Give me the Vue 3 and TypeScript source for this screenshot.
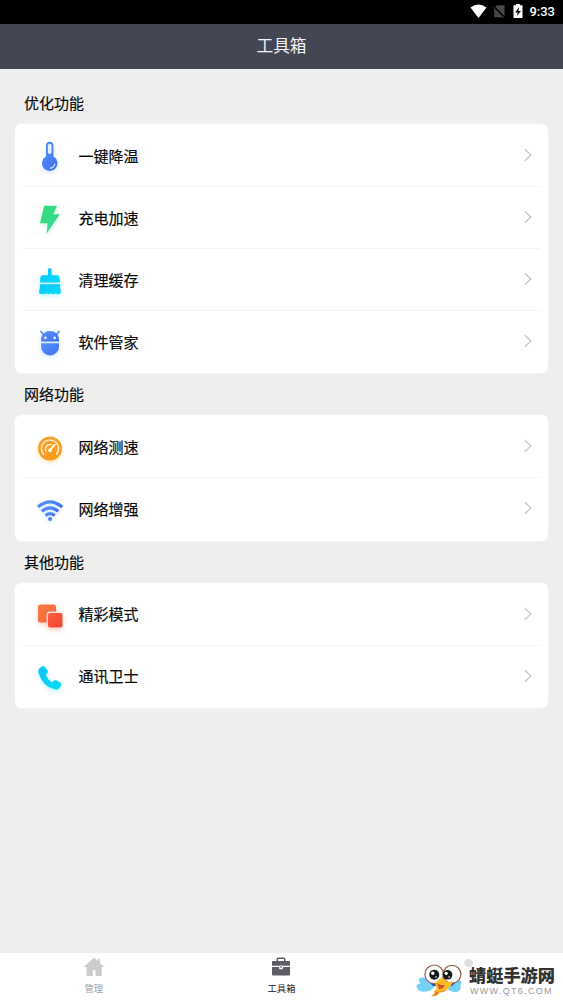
<script setup lang="ts">
interface Tool { icon: string; label: string }
interface Section { title: string; tools: Tool[] }

const sections: Section[] = [
  {
    title: '优化功能',
    tools: [
      { icon: 'thermo', label: '一键降温' },
      { icon: 'bolt', label: '充电加速' },
      { icon: 'brush', label: '清理缓存' },
      { icon: 'robot', label: '软件管家' },
    ],
  },
  {
    title: '网络功能',
    tools: [
      { icon: 'gauge', label: '网络测速' },
      { icon: 'wifi', label: '网络增强' },
    ],
  },
  {
    title: '其他功能',
    tools: [
      { icon: 'squares', label: '精彩模式' },
      { icon: 'phone', label: '通讯卫士' },
    ],
  },
]
</script>

<template>
  <div class="screen">
    <svg class="defs" width="0" height="0">
      <defs>
        <linearGradient id="blue" x1="0" y1="0" x2="1" y2="1"><stop offset="0" stop-color="#5a92fa" /><stop offset="1" stop-color="#3b6ff0" /></linearGradient>
        <linearGradient id="green" x1="0" y1="0" x2="1" y2="1"><stop offset="0" stop-color="#2fdc74" /><stop offset="1" stop-color="#3ed79f" /></linearGradient>
        <linearGradient id="cyan" x1="0" y1="0" x2="1" y2="1"><stop offset="0" stop-color="#0bc4fb" /><stop offset="1" stop-color="#08dcf6" /></linearGradient>
        <linearGradient id="orange" x1="0" y1="0" x2="1" y2="1"><stop offset="0" stop-color="#f2a13a" /><stop offset="1" stop-color="#fd9a0c" /></linearGradient>
        <linearGradient id="coral" x1="0" y1="0" x2="1" y2="1"><stop offset="0" stop-color="#f77c45" /><stop offset="1" stop-color="#fa5f3c" /></linearGradient>
        <linearGradient id="red" x1="0" y1="0" x2="1" y2="1"><stop offset="0" stop-color="#fb6145" /><stop offset="1" stop-color="#f63f2e" /></linearGradient>
      </defs>
    </svg>

    <div class="status">
      <svg class="status-icons" viewBox="0 0 56 18" width="56" height="18">
        <path d="M.5 4.400Q8.500-1.400 16.500 4.400L8.500 15Z" fill="#fff" />
        <path d="M27 2.200H34.500V14.200H24.200V5Z" fill="#484848" />
        <path d="M22.900 2.900 35 15" stroke="#000" stroke-width="1.800" />
        <path d="M22.600 3.700 34 15" stroke="#484848" stroke-width=".8" />
        <path d="M46 1H50V2.300H52.500V15H43.500V2.300H46Z" fill="#fff" />
        <path d="M49.100 4 45.200 9.400H47.700L47 13 50.900 7.900H48.400Z" fill="#000" />
      </svg>
      <span class="time">9:33</span>
    </div>

    <header class="header">工具箱</header>

    <main class="content">
      <section v-for="section in sections" :key="section.title">
        <h2 class="title">{{ section.title }}</h2>
        <ul class="card">
          <li v-for="tool in section.tools" :key="tool.label" class="row">
            <svg class="icon" :class="tool.icon" viewBox="0 0 36 36" width="36" height="36">
              <g v-if="tool.icon === 'thermo'">
                <path d="M14 8.400A3.700 3.700 0 0 1 21.400 8.400V19.600A7.700 7.700 0 1 1 14 19.600Z" fill="url(#blue)" />
                <rect x="15.900" y="6.700" width="3.600" height="10.400" rx="1.800" fill="#e7f0ff" />
                <path d="M18.400 31.200A5.100 5.100 0 0 0 22.800 27" fill="none" stroke="#e1edff" stroke-width="1.200" stroke-linecap="round" />
              </g>
              <path v-else-if="tool.icon === 'bolt'" d="M12.300 6.700H25L21.400 15.300H27.800L14.500 34.800 15.700 24.300H8Z" fill="url(#green)" />
              <g v-else-if="tool.icon === 'brush'" fill="url(#cyan)">
                <path d="M16 9Q16 7 17.850 7T19.700 9V14.300H25.200Q27.400 14.300 27.600 16.500L28 21.500H8L8.400 16.500Q8.600 14.300 10.800 14.300H16Z" />
                <path d="M8 23.200H28Q28 27 29 31Q29 33 27 33H24.300V31.200L23 33H19.500V31.200L18.200 33H14.800V31.200L13.500 33H8.800Q6.800 33 7.100 31Q8 27 8 23.200Z" />
              </g>
              <g v-else-if="tool.icon === 'robot'">
                <path d="M9 8.500 11.500 11.500M27 8.500 24.500 11.500" stroke="#5686f5" stroke-width="1.700" stroke-linecap="round" />
                <path d="M9 18.500Q8.800 13 11.500 10.400Q14 8 18 8T24.500 10.400Q27.200 13 27 18.500Z" fill="url(#blue)" />
                <path d="M9 20.300H27V23.500A9 9 0 0 1 9 23.500Z" fill="url(#blue)" />
                <circle cx="13.400" cy="14.900" r="1.300" fill="#e8f0ff" /><circle cx="22.600" cy="14.900" r="1.300" fill="#e8f0ff" />
              </g>
              <g v-else-if="tool.icon === 'gauge'" fill="none">
                <circle cx="18" cy="20.500" r="12" fill="url(#orange)" />
                <path d="M11.800 26.500A8.600 8.600 0 1 1 24.200 26.500" stroke="#ffe9c4" stroke-width="1.500" stroke-linecap="round" />
                <path d="M13.600 23A5 5 0 0 1 19.500 16.600" stroke="#ffe9c4" stroke-width="1.400" stroke-linecap="round" />
                <path d="M18 22 22.800 16.700" stroke="#fff8e8" stroke-width="1.900" stroke-linecap="round" />
                <circle cx="18" cy="22.300" r="1.900" fill="#fff8e8" />
              </g>
              <g v-else-if="tool.icon === 'wifi'" fill="none" stroke="url(#blue)" stroke-width="3.200">
                <path d="M6 16.900Q18 6.700 30.200 16.900" />
                <path d="M9.900 21.300Q18 14.500 26.300 21.300" />
                <path d="M13.600 25.500Q18 21.900 22.600 25.500" />
                <circle cx="18.100" cy="28.900" r="2" fill="#4b7ff5" stroke="none" />
              </g>
              <g v-else-if="tool.icon === 'squares'">
                <rect x="6" y="8.500" width="18" height="18" rx="2.500" fill="url(#coral)" />
                <rect x="14.600" y="15.600" width="16.400" height="16.400" rx="3" fill="#ffe2da" />
                <rect x="15.900" y="16.900" width="14.500" height="14.500" rx="2.200" fill="url(#red)" />
              </g>
              <path v-else d="M7.500 10.200 9.900 8.400Q11.500 7.400 12.800 9L15.500 12.500Q16.400 13.800 15.200 15.200L13.700 17Q15.400 21.400 19.900 24.200L22.300 22.500Q23.500 21.700 24.800 22.400L28.600 24.700Q30 25.800 29 27.500L27.500 29.900Q26 32 22.600 31.300Q11 28.700 6.600 15Q5.700 11.900 7.500 10.200Z" fill="url(#cyan)" />
            </svg>
            <span class="label">{{ tool.label }}</span>
            <svg class="chevron" viewBox="0 0 8 14" width="8" height="14"><path d="M.8 1.200 6.900 7 .8 12.800" fill="none" stroke="#c8c8c8" stroke-width="1.300" /></svg>
          </li>
        </ul>
      </section>
    </main>

    <nav class="tabs">
      <div class="tab">
        <svg viewBox="0 0 22 20" width="22" height="20"><path d="M11 .7 14.800 4V2.300H17V5.900L21.500 10H18.700V19H12.600V13.300H9.800V19H3.500V10H.5Z" fill="#cbccd0" /></svg>
        <span>管理</span>
      </div>
      <div class="tab active">
        <svg viewBox="0 0 22 20" width="22" height="20">
          <path d="M7.300 4.500V2Q7.300 1.200 8.200 1.200H13.800Q14.700 1.200 14.700 2V4.500" fill="none" stroke="#5c5d66" stroke-width="1.500" />
          <path d="M3 4H19Q20 4 20 5V8.800H2V5Q2 4 3 4ZM2 10H9.200V12.300H12.800V10H20V17.500Q20 18.600 19 18.600H3Q2 18.600 2 17.500Z" fill="#5c5d66" />
          <rect x="9.700" y="8.400" width="2.600" height="3.200" fill="#fff" /><rect x="10.400" y="8.700" width="1.200" height="2.100" fill="#5c5d66" />
        </svg>
        <span>工具箱</span>
      </div>
      <div class="tab"></div>
    </nav>

    <div class="watermark">
      <svg viewBox="0 0 60 46" width="60" height="46">
        <circle cx="52.500" cy="9" r="4.300" fill="#dedee0" />
        <path d="M12 25Q4 22 2.500 25.500Q2.500 28 5 29Q0 30 .7 33.500Q3 39 11 37.500Q17 36 20 30ZM31 28L43 26Q47 27 44.500 31Q46 36 41 38Q35 39 29 33Z" fill="#74d0f6" />
        <path d="M11 26 23 22 41 27 36 32 17 32Z" fill="#24589a" />
        <g fill="#fff" stroke="#96614a" stroke-width="1.200"><circle cx="18.200" cy="20.300" r="9.300" /><circle cx="36" cy="20.300" r="8.900" /></g>
        <path d="M21.500 27Q24 22.500 28 24.500Q30 29 36 27.500Q37 30 33.500 33Q30 38 23 38Q22 42.500 15 42Q20 40 18.500 37Q22 35 19.500 31Q19 28 21.500 27Z" fill="#f9bc25" />
        <path d="M21 29Q25 32 29 31Q27 35.500 23 35Z" fill="#d94c27" /><path d="M18.500 37Q25 39 31 35Q28 39 23 38.500Q22 42.500 15 42Q20 40 18.500 37Z" fill="#ee8121" />
        <circle cx="18.300" cy="20.800" r="5" fill="#17191d" /><circle cx="31.600" cy="20.800" r="4.800" fill="#17191d" />
        <circle cx="16.800" cy="19.300" r="1.700" fill="#fff" /><circle cx="30.200" cy="19.300" r="1.600" fill="#fff" />
        <circle cx="20" cy="23" r="1" fill="#aaa" /><circle cx="33.200" cy="23" r="1" fill="#aaa" />
      </svg>
      <div class="brand"><b>蜻蜓手游网</b><small>WWW.QT6.COM</small></div>
    </div>
  </div>
</template>

<style>
body { margin: 0; background: #eee; }
</style>

<style scoped>
.screen { position: relative; display: flex; flex-direction: column; width: 563px; height: 1000px; overflow: hidden; background: #eee; color: #080808; font-family: "Noto Sans CJK SC", sans-serif; }
.defs { position: absolute; }
.status { display: flex; flex: none; justify-content: flex-end; align-items: center; height: 24px; padding-right: 8px; background: #000; color: #fff; }
.status-icons { margin-right: 3px; }
.time { width: 26px; margin-left: 0; font: 500 13px/24px Roboto, sans-serif; text-align: right; white-space: nowrap; }
.header { flex: none; height: 45px; background: #444654; color: #f4f4f8; font-size: 16.700px; line-height: 43px; text-align: center; }
.content { flex: 1; padding: 13px 15px 0; }
.title { height: 42px; margin: 0; padding-left: 9px; font-size: 15px; font-weight: 400; line-height: 42px; -webkit-text-stroke: .15px #080808; }
.card { margin: 0; padding: 0 8px 1.300px; border-radius: 7px; background: #fff; box-shadow: 0 0 2px #fff; list-style: none; }
.row { display: flex; align-items: center; box-sizing: border-box; height: 62px; padding: 0 8px 0 9px; }
.row + .row { box-shadow: inset 0 1px #f4f4f4; }
.icon { flex: none; overflow: visible; filter: drop-shadow(0 2px 2px rgba(80, 150, 255, .25)); }
.icon.bolt { filter: drop-shadow(0 2px 2px rgba(50, 220, 140, .25)); }
.icon.brush, .icon.phone { filter: drop-shadow(0 2px 2px rgba(0, 210, 255, .3)); }
.icon.gauge { filter: drop-shadow(0 2px 2px rgba(255, 165, 30, .3)); }
.icon.squares { filter: drop-shadow(0 2px 2px rgba(255, 90, 60, .3)); }
.label { flex: 1; margin-left: 10.500px; padding-top: 1px; font-size: 15px; line-height: 22px; -webkit-text-stroke: .2px #080808; }
.tabs { display: grid; grid-template-columns: repeat(3, 1fr); flex: none; height: 47px; background: #fff; }
.tab { display: flex; flex-direction: column; align-items: center; padding-top: 4px; color: #a2a2a5; font-size: 9.300px; line-height: 14px; }
.tab span { margin-top: 4px; }
.active { color: #202024; }
.watermark { position: absolute; left: 416px; top: 954px; display: flex; }
.brand { display: flex; flex-direction: column; margin-left: -7px; padding-top: 10px; color: #333; }
.brand b { font-size: 17.200px; font-weight: 900; line-height: 22px; }
.brand small { margin: -1px 0 0 1px; color: #999; font: 9px/12px "Liberation Sans", sans-serif; letter-spacing: 1.300px; }
</style>
